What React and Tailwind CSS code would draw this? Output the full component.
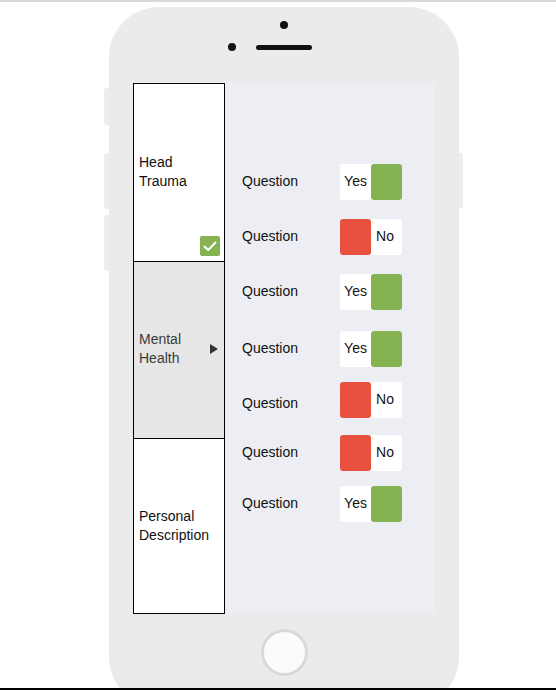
const questions = [
  { answer: "yes", mt: "mt-0" },
  { answer: "no", mt: "mt-[19px]" },
  { answer: "yes", mt: "mt-[19px]" },
  { answer: "yes", mt: "mt-[21px]" },
  { answer: "no", mt: "mt-[15px]", labelShift: "pt-[6px]" },
  { answer: "no", mt: "mt-[17px]" },
  { answer: "yes", mt: "mt-[15px]" },
];

function Toggle({ answer }) {
  if (answer === "yes") {
    return (
      <div className="flex h-[36px] w-[62px] rounded-[3px] bg-white">
        <div className="flex w-[31px] items-center justify-center pb-[2px] text-[14px] text-[#111]">Yes</div>
        <div className="w-[31px] rounded-[3px] bg-[#86b351]" />
      </div>
    );
  }
  return (
    <div className="flex h-[36px] w-[62px] rounded-[3px] bg-white">
      <div className="w-[31px] rounded-[3px] bg-[#e8513f]" />
      <div className="flex w-[31px] items-center justify-center pb-[2px] pr-[3px] text-[14px] text-[#111]">No</div>
    </div>
  );
}

function App() {
  return (
    <div
      className="relative h-[690px] w-[556px] overflow-hidden border-t-2 border-b-2 border-t-[#d9d9d9] border-b-black bg-white"
      style={{ fontFamily: '"Liberation Sans", Arial, sans-serif' }}
    >
      {/* side buttons */}
      <div className="absolute left-[104px] top-[86px] h-[37px] w-[6px] rounded-l-[3px] bg-[#ededed]" />
      <div className="absolute left-[104px] top-[151px] h-[56px] w-[6px] rounded-l-[3px] bg-[#ededed]" />
      <div className="absolute left-[104px] top-[213px] h-[56px] w-[6px] rounded-l-[3px] bg-[#ededed]" />
      <div className="absolute left-[457px] top-[151px] h-[55px] w-[6px] rounded-r-[3px] bg-[#ededed]" />

      <div className="relative ml-[109px] mt-[5px] flex h-[700px] w-[350px] flex-col rounded-[50px] bg-[#ebebeb]">
        {/* top: camera + speaker */}
        <div className="flex h-[75px] flex-col items-center pt-[14px]">
          <div className="h-[8px] w-[8px] rounded-full bg-[#111]" />
          <div className="mt-[14px] flex items-center gap-[20px]">
            <div className="h-[8px] w-[8px] rounded-full bg-[#111]" />
            <div className="h-[5px] w-[56px] rounded-full bg-[#111]" />
            <div className="h-[8px] w-[8px]" />
          </div>
        </div>

        {/* screen */}
        <div className="ml-[24px] flex h-[532px] w-[301px] bg-[#eceef3]">
          <div className="mt-[1px] flex h-[531px] w-[92px] flex-col border border-black bg-white text-[14px] leading-[19px]">
            <div className="relative flex h-[177px] items-center px-[5px] pb-[2px] text-[#111]">
              <div>
                Head
                <br />
                Trauma
              </div>
              <div className="absolute bottom-[5px] right-[4px] flex h-[20px] w-[20px] items-center justify-center rounded-[2px] bg-[#86b351]">
                <svg width="16" height="16" viewBox="0 0 16 16" fill="none">
                  <path d="M2.5 8.5 L6.2 12 L13.5 4.5" stroke="white" strokeWidth="2" strokeLinecap="round" strokeLinejoin="round" />
                </svg>
              </div>
            </div>
            <div className="flex h-[177px] items-center justify-between border-t border-black bg-[#e6e6e6] pb-[2px] pl-[5px] pr-[6px] text-[#3a3a3a]">
              <div>
                Mental
                <br />
                Health
              </div>
              <div className="h-0 w-0 border-y-[5px] border-l-[8px] border-y-transparent border-l-[#333]" />
            </div>
            <div className="flex flex-1 items-center border-t border-black px-[5px] text-[#111]">
              <div>
                Personal
                <br />
                Description
              </div>
            </div>
          </div>

          <div className="flex flex-1 flex-col pl-[17px] pt-[82px]">
            {questions.map((q, i) => (
              <div key={i} className={`flex h-[36px] items-center ${q.mt}`}>
                <div className={`w-[98px] text-[14px] text-[#111] ${q.labelShift || "pb-[2px]"}`}>Question</div>
                <Toggle answer={q.answer} />
              </div>
            ))}
          </div>
        </div>

        {/* home button */}
        <div className="mt-[15px] flex justify-center">
          <div className="h-[47px] w-[47px] rounded-full border-[3px] border-[#d9d9d9] bg-[#fbfbfb]" />
        </div>
      </div>
    </div>
  );
}

export default App;
